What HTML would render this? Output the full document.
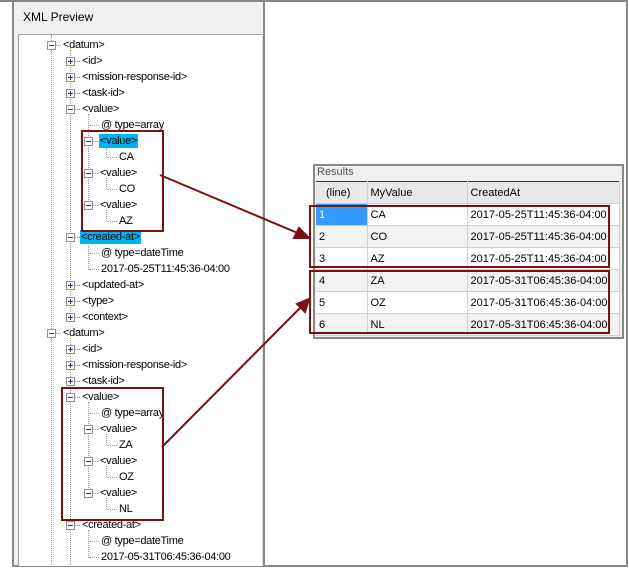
<!DOCTYPE html>
<html><head><style>
body{margin:0;width:629px;height:569px;background:#fff;position:relative;overflow:hidden;font-family:"Liberation Sans",sans-serif;font-size:11px;color:#000}
.a{position:absolute}
.t{position:absolute;white-space:nowrap;line-height:14px;height:14px;padding:0 1px;letter-spacing:-0.3px}
.b{position:absolute;width:7px;height:7px;border:1px solid #919191;background:#fff}
.b:before{content:"";position:absolute;left:1px;top:3px;width:5px;height:1px;background:#1a3a7a}
.p:after{content:"";position:absolute;left:3px;top:1px;width:1px;height:5px;background:#1a3a7a}
.v{position:absolute;width:0;border-left:1px dotted #999}
.h{position:absolute;height:0;border-top:1px dotted #999}
.hl{background:#00b4f0}
.r{position:absolute;border:2px solid #7a1010}
table{table-layout:fixed}
td{border-right:1px solid #d0d0d0;border-bottom:1px solid #d0d0d0;padding:0 3px;height:21px;font-size:11px;white-space:nowrap;overflow:hidden;box-sizing:border-box}
</style></head><body>
<div class="a" style="left:0;top:0;width:627px;height:2px;background:#888"></div>
<div class="a" style="left:626px;top:0;width:2px;height:567px;background:#888"></div>
<div class="a" style="left:12px;top:565px;width:616px;height:2px;background:#888"></div>
<div class="a" style="left:12px;top:2px;width:2px;height:565px;background:#888"></div>
<div class="a" style="left:14px;top:2px;width:249px;height:563px;background:#f0f0f0"></div>
<div class="a" style="left:263px;top:2px;width:2px;height:565px;background:#888"></div>
<div class="a" style="left:23px;top:10px;font-size:12px">XML Preview</div>
<div class="a" style="left:18px;top:34px;width:243px;height:531px;background:#fff;border-top:1px solid #a0a0a0;border-left:1px solid #a0a0a0;border-right:1px solid #e0e0e0"></div>
<div class="v" style="left:51px;top:35px;height:530px"></div>
<div class="v" style="left:70px;top:50px;height:270px"></div>
<div class="v" style="left:70px;top:338px;height:227px"></div>
<div class="v" style="left:88px;top:114px;height:92px"></div>
<div class="v" style="left:88px;top:242px;height:28px"></div>
<div class="v" style="left:88px;top:402px;height:92px"></div>
<div class="v" style="left:88px;top:530px;height:28px"></div>
<div class="v" style="left:106px;top:146px;height:11px"></div>
<div class="v" style="left:106px;top:178px;height:11px"></div>
<div class="v" style="left:106px;top:210px;height:11px"></div>
<div class="v" style="left:106px;top:434px;height:11px"></div>
<div class="v" style="left:106px;top:466px;height:11px"></div>
<div class="v" style="left:106px;top:498px;height:11px"></div>
<div class="b" style="left:47px;top:41px"></div><div class="h" style="left:56px;top:45px;width:5px"></div><div class="t" style="left:62px;top:38px">&lt;datum&gt;</div>
<div class="b p" style="left:66px;top:57px"></div><div class="h" style="left:75px;top:61px;width:5px"></div><div class="t" style="left:81px;top:54px">&lt;id&gt;</div>
<div class="b p" style="left:66px;top:73px"></div><div class="h" style="left:75px;top:77px;width:5px"></div><div class="t" style="left:81px;top:70px">&lt;mission-response-id&gt;</div>
<div class="b p" style="left:66px;top:89px"></div><div class="h" style="left:75px;top:93px;width:5px"></div><div class="t" style="left:81px;top:86px">&lt;task-id&gt;</div>
<div class="b" style="left:66px;top:105px"></div><div class="h" style="left:75px;top:109px;width:5px"></div><div class="t" style="left:81px;top:102px">&lt;value&gt;</div>
<div class="h" style="left:89px;top:125px;width:10px"></div><div class="t" style="left:100px;top:118px">@ type=array</div>
<div class="b" style="left:84px;top:137px"></div><div class="h" style="left:93px;top:141px;width:5px"></div><div class="t hl" style="left:99px;top:134px">&lt;value&gt;</div>
<div class="h" style="left:107px;top:157px;width:10px"></div><div class="t" style="left:118px;top:150px">CA</div>
<div class="b" style="left:84px;top:169px"></div><div class="h" style="left:93px;top:173px;width:5px"></div><div class="t" style="left:99px;top:166px">&lt;value&gt;</div>
<div class="h" style="left:107px;top:189px;width:10px"></div><div class="t" style="left:118px;top:182px">CO</div>
<div class="b" style="left:84px;top:201px"></div><div class="h" style="left:93px;top:205px;width:5px"></div><div class="t" style="left:99px;top:198px">&lt;value&gt;</div>
<div class="h" style="left:107px;top:221px;width:10px"></div><div class="t" style="left:118px;top:214px">AZ</div>
<div class="b" style="left:66px;top:233px"></div><div class="h" style="left:75px;top:237px;width:5px"></div><div class="t hl" style="left:80px;top:230px">&lt;created-at&gt;</div>
<div class="h" style="left:89px;top:253px;width:10px"></div><div class="t" style="left:100px;top:246px">@ type=dateTime</div>
<div class="h" style="left:89px;top:269px;width:10px"></div><div class="t" style="left:100px;top:262px">2017-05-25T11:45:36-04:00</div>
<div class="b p" style="left:66px;top:281px"></div><div class="h" style="left:75px;top:285px;width:5px"></div><div class="t" style="left:81px;top:278px">&lt;updated-at&gt;</div>
<div class="b p" style="left:66px;top:297px"></div><div class="h" style="left:75px;top:301px;width:5px"></div><div class="t" style="left:81px;top:294px">&lt;type&gt;</div>
<div class="b p" style="left:66px;top:313px"></div><div class="h" style="left:75px;top:317px;width:5px"></div><div class="t" style="left:81px;top:310px">&lt;context&gt;</div>
<div class="b" style="left:47px;top:329px"></div><div class="h" style="left:56px;top:333px;width:5px"></div><div class="t" style="left:62px;top:326px">&lt;datum&gt;</div>
<div class="b p" style="left:66px;top:345px"></div><div class="h" style="left:75px;top:349px;width:5px"></div><div class="t" style="left:81px;top:342px">&lt;id&gt;</div>
<div class="b p" style="left:66px;top:361px"></div><div class="h" style="left:75px;top:365px;width:5px"></div><div class="t" style="left:81px;top:358px">&lt;mission-response-id&gt;</div>
<div class="b p" style="left:66px;top:377px"></div><div class="h" style="left:75px;top:381px;width:5px"></div><div class="t" style="left:81px;top:374px">&lt;task-id&gt;</div>
<div class="b" style="left:66px;top:393px"></div><div class="h" style="left:75px;top:397px;width:5px"></div><div class="t" style="left:81px;top:390px">&lt;value&gt;</div>
<div class="h" style="left:89px;top:413px;width:10px"></div><div class="t" style="left:100px;top:406px">@ type=array</div>
<div class="b" style="left:84px;top:425px"></div><div class="h" style="left:93px;top:429px;width:5px"></div><div class="t" style="left:99px;top:422px">&lt;value&gt;</div>
<div class="h" style="left:107px;top:445px;width:10px"></div><div class="t" style="left:118px;top:438px">ZA</div>
<div class="b" style="left:84px;top:457px"></div><div class="h" style="left:93px;top:461px;width:5px"></div><div class="t" style="left:99px;top:454px">&lt;value&gt;</div>
<div class="h" style="left:107px;top:477px;width:10px"></div><div class="t" style="left:118px;top:470px">OZ</div>
<div class="b" style="left:84px;top:489px"></div><div class="h" style="left:93px;top:493px;width:5px"></div><div class="t" style="left:99px;top:486px">&lt;value&gt;</div>
<div class="h" style="left:107px;top:509px;width:10px"></div><div class="t" style="left:118px;top:502px">NL</div>
<div class="b" style="left:66px;top:521px"></div><div class="h" style="left:75px;top:525px;width:5px"></div><div class="t" style="left:81px;top:518px">&lt;created-at&gt;</div>
<div class="h" style="left:89px;top:541px;width:10px"></div><div class="t" style="left:100px;top:534px">@ type=dateTime</div>
<div class="h" style="left:89px;top:557px;width:10px"></div><div class="t" style="left:100px;top:550px">2017-05-31T06:45:36-04:00</div>
<div class="a" style="left:313px;top:164px;width:307px;height:171px;border:2px solid #888;background:#f0f0f0"></div>
<div class="a" style="left:317px;top:166px;color:#555;font-size:11px">Results</div>
<table class="a" style="left:316px;top:181px;width:304px;border-collapse:collapse;border-top:1px solid #333;background:#fff" cellspacing="0">
<colgroup><col style="width:51px"><col style="width:100px"><col></colgroup>
<tr style="background:#e8e8e8"><td style="padding-left:10px;height:22px">(line)</td><td>MyValue</td><td>CreatedAt</td></tr>
<tr><td style="background:#3399ff;color:#fff;height:22px">1</td><td>CA</td><td>2017-05-25T11:45:36-04:00</td></tr>
<tr style="background:#f2f2f2"><td style="height:22px">2</td><td>CO</td><td>2017-05-25T11:45:36-04:00</td></tr>
<tr><td style="height:22px">3</td><td>AZ</td><td>2017-05-25T11:45:36-04:00</td></tr>
<tr style="background:#f2f2f2"><td style="height:22px">4</td><td>ZA</td><td>2017-05-31T06:45:36-04:00</td></tr>
<tr><td style="height:22px">5</td><td>OZ</td><td>2017-05-31T06:45:36-04:00</td></tr>
<tr style="background:#f2f2f2"><td style="height:22px">6</td><td>NL</td><td>2017-05-31T06:45:36-04:00</td></tr>
</table>
<div class="r" style="left:81px;top:130px;width:79px;height:98px"></div>
<div class="r" style="left:61px;top:387px;width:99px;height:130px"></div>
<div class="r" style="left:309px;top:205px;width:297px;height:59px"></div>
<div class="r" style="left:309px;top:270px;width:297px;height:60px"></div>
<svg class="a" style="left:0;top:0" width="629" height="569">
<g stroke="#7a1010" stroke-width="2" fill="#7a1010">
<line x1="160" y1="175" x2="300" y2="234"/>
<polygon points="309,238 294,238 299,228"/>
<line x1="162" y1="447" x2="302" y2="306"/>
<polygon points="309,299 305,312 297,304"/>
</g></svg>
</body></html>
